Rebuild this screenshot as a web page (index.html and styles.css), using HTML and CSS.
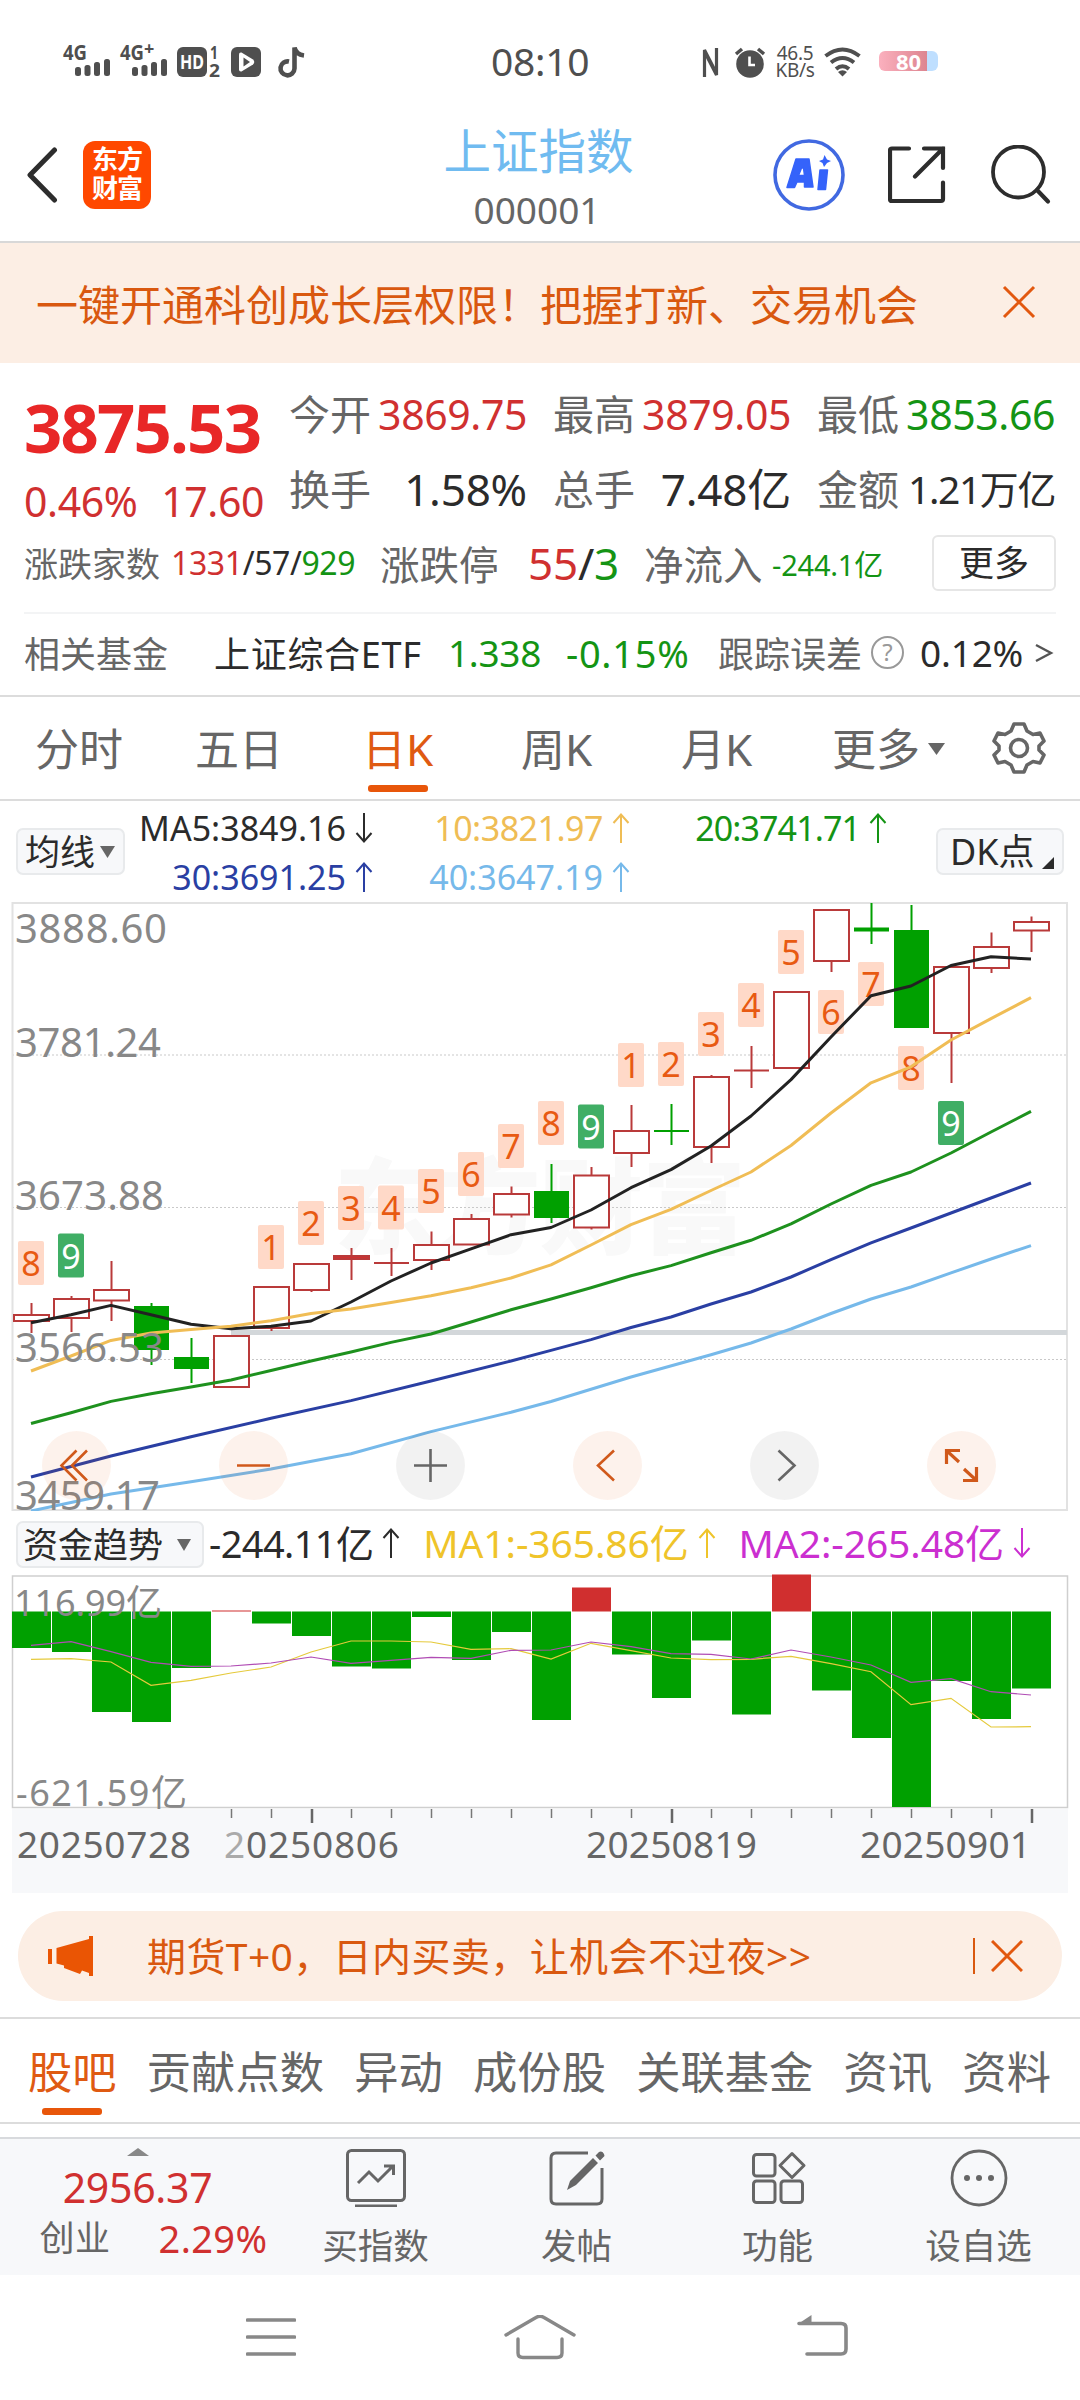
FILE: index.html
```html
<!DOCTYPE html>
<html lang="zh-CN">

<head>
    <meta charset="UTF-8">
    <meta name="viewport" content="width=device-width, initial-scale=1.0">
    <link rel="stylesheet" href="styles.css">
    <title>上证指数 000001</title>
</head>

<body>
    <!-- shared arrow icons -->
    <svg class="defs" width="0" height="0">
        <symbol id="up" viewBox="0 0 18 30"><path d="M9 30V2M1.500 10L9 1.500L16.500 10" fill="none" stroke="currentColor" stroke-width="2"/></symbol>
        <symbol id="down" viewBox="0 0 18 30"><path d="M9 0V28M1.500 20L9 28.500L16.500 20" fill="none" stroke="currentColor" stroke-width="2"/></symbol>
    </svg>

    <div class="status">
        <div class="status-left">
            <svg width="48" height="34" viewBox="0 0 48 34">
                <text x="0" y="17" font-size="21" font-weight="700" textLength="24" lengthAdjust="spacingAndGlyphs">4G</text>
                <rect x="12" y="24" width="6" height="9" rx="2.500"/><rect x="21.500" y="22" width="6" height="11" rx="2.500"/><rect x="31" y="19" width="6" height="14" rx="2.500"/><rect x="41" y="16" width="6" height="17" rx="2.500"/>
            </svg>
            <svg class="ml9" width="48" height="34" viewBox="0 0 48 34">
                <text x="0" y="17" font-size="21" font-weight="700" textLength="24" lengthAdjust="spacingAndGlyphs">4G</text>
                <text x="24" y="12" font-size="18" font-weight="700">+</text>
                <rect x="12" y="24" width="6" height="9" rx="2.500"/><rect x="21.500" y="22" width="6" height="11" rx="2.500"/><rect x="31" y="19" width="6" height="14" rx="2.500"/><rect x="41" y="16" width="6" height="17" rx="2.500"/>
            </svg>
            <svg class="ml9" width="43" height="34" viewBox="0 0 43 34">
                <rect x="0" y="4" width="30" height="30" rx="6"/>
                <text class="w" x="3" y="26" font-size="19" font-weight="700" textLength="24" lengthAdjust="spacingAndGlyphs">HD</text>
                <text x="33" y="16" font-size="17" font-weight="700" textLength="8" lengthAdjust="spacingAndGlyphs">1</text>
                <text x="32" y="34" font-size="17" font-weight="700" textLength="11" lengthAdjust="spacingAndGlyphs">2</text>
            </svg>
            <svg class="ml11" width="30" height="34" viewBox="0 0 30 34">
                <rect x="0" y="4" width="30" height="30" rx="6"/>
                <path class="w" d="M10.500 9.500L22 16.500Q24.500 19 22 21.500L10.500 28.500Q8 29 8 26.500V11.500Q8 9 10.500 9.500Z"/>
                <path d="M12.500 14.500L19 19L12.500 23.500Z"/>
            </svg>
            <svg class="ml17" width="27" height="34" viewBox="0 0 27 34">
                <path d="M11 18.500A7 7 0 1 0 16.500 25.500V4.500Q18 11.500 26 12.500" fill="none" stroke="#4f4f4f" stroke-width="4.600"/>
            </svg>
        </div>
        <div class="clock">08:10</div>
        <div class="status-right">
            <svg width="19" height="31" viewBox="0 0 19 31"><path d="M3.500 30V3L13 21.500" fill="none" stroke="#4f4f4f" stroke-width="3.200"/><path d="M15.500 1V28L6 9.500" fill="none" stroke="#4f4f4f" stroke-width="3.200"/></svg>
            <svg class="ml15" width="30" height="31" viewBox="0 0 30 31"><circle cx="15" cy="17" r="13.800"/><path d="M1 7L7 2M29 7L23 2" stroke="#4f4f4f" stroke-width="3.500"/><path d="M14.500 9.500V18H20" fill="none" stroke="#fff" stroke-width="2.600"/></svg>
            <div class="speed"><span>46.5</span><span>KB/s</span></div>
            <svg class="ml9" width="37" height="30" viewBox="0 0 37 30"><g fill="none" stroke="#4f4f4f" stroke-width="4"><path d="M1.500 9Q18.500 -4 35.500 9"/><path d="M7 15.500Q18.500 6.500 30 15.500"/><path d="M12 22Q18.500 16.500 25 22"/></g><path d="M14 25Q18.500 21.500 23 25L18.500 29.500Z"/></svg>
            <div class="battery">80</div>
        </div>
    </div>

    <header>
        <div class="head-left">
            <svg width="32" height="56" viewBox="0 0 32 56"><path d="M28.500 3L4 28L28.500 53" fill="none" stroke="#2d2d2d" stroke-width="5" stroke-linecap="round" stroke-linejoin="round"/></svg>
            <div class="logo">东方<br>财富</div>
        </div>
        <div class="title">
            <h1>上证指数</h1>
            <div class="code">000001</div>
        </div>
        <div class="head-right">
            <svg width="72" height="72" viewBox="0 0 72 72">
                <circle cx="36" cy="36" r="34" fill="none" stroke="#4169e1" stroke-width="3.600"/>
                <path d="M23 20H36L40 48H31.500V43H24L21.500 48.500H14ZM28.500 29L25.500 36.500H31.500L30.500 29Z" fill="#3563fa" stroke="#3563fa" stroke-width="1.500" stroke-linejoin="round"/>
                <path d="M47 31H54.500L52.500 50.500H45Z" fill="#3563fa" stroke="#3563fa" stroke-width="1.500" stroke-linejoin="round"/>
                <path d="M51.500 16L54 20.500L58 22L54 24L51 28L49.500 24L46 22L50 20.500Z" fill="#3563fa"/>
            </svg>
            <svg class="share" width="58" height="58" viewBox="0 0 58 58"><path d="M21 2.500H4Q2 2.500 2 4.500V53Q2 55 4 55H53Q55 55 55 53V36.500M36 2.500H55V22M55 2.500L27 30.500" fill="none" stroke="#2d2d2d" stroke-width="4.200" stroke-linecap="round"/></svg>
            <svg class="find" width="60" height="60" viewBox="0 0 60 60"><circle cx="27.500" cy="27" r="25.500" fill="none" stroke="#2d2d2d" stroke-width="3.800"/><path d="M46 45L57 56.500" stroke="#2d2d2d" stroke-width="4.200" stroke-linecap="round"/></svg>
        </div>
    </header>

    <div class="notice">
        <span>一键开通科创成长层权限！把握打新、交易机会</span>
        <svg width="34" height="34" viewBox="0 0 34 34"><path d="M2 2L32 32M32 2L2 32" stroke="#e2580f" stroke-width="3"/></svg>
    </div>

    <section class="quote">
        <div class="quote-top">
            <div class="last">
                <div class="price red">3875.53</div>
                <div class="change red"><span>0.46%</span><span>17.60</span></div>
            </div>
            <div class="cells">
                <div class="cell"><label>今开</label><b class="red">3869.75</b></div>
                <div class="cell"><label>最高</label><b class="red">3879.05</b></div>
                <div class="cell"><label>最低</label><b class="green">3853.66</b></div>
                <div class="cell"><label>换手</label><b class="big">1.58%</b></div>
                <div class="cell"><label>总手</label><b class="big vol">7.48亿</b></div>
                <div class="cell"><label>金额</label><b class="amount">1.21万亿</b></div>
            </div>
        </div>
        <div class="breadth">
            <label class="l1">涨跌家数</label>
            <span class="n1"><i class="red">1331</i>/57/<i class="green">929</i></span>
            <label class="l2">涨跌停</label>
            <span class="n2"><i class="red">55</i>/<i class="green">3</i></span>
            <label class="l3">净流入</label>
            <span class="n3 green">-244.1亿</span>
            <button class="more">更多</button>
        </div>
        <div class="fund">
            <label>相关基金</label>
            <span class="etf">上证综合ETF</span>
            <span class="f1 green">1.338</span>
            <span class="f2 green">-0.15%</span>
            <label class="track">跟踪误差</label>
            <span class="help">?</span>
            <span class="f3">0.12%</span>
            <svg width="20" height="22" viewBox="0 0 20 22"><path d="M2 3L17 11L2 19" fill="none" stroke="#555" stroke-width="2.400"/></svg>
        </div>
    </section>

    <nav class="periods">
        <a>分时</a><a>五日</a><a class="on">日K</a><a>周K</a><a>月K</a>
        <a class="drop">更多<svg width="17" height="12"><path d="M0 0H17L8.500 12Z" fill="#666"/></svg></a>
        <svg class="gear" width="54" height="54" viewBox="-27 -27 54 54"><g fill="none" stroke="#666" stroke-width="3.600" stroke-linejoin="round"><path d="M-5 -24H5L8 -17L14 -13.500L21 -15L25 -7L20 -2V2L25 7L21 15L14 13.500L8 17L5 24H-5L-8 17L-14 13.500L-21 15L-25 7L-20 2V-2L-25 -7L-21 -15L-14 -13.500L-8 -17Z"/><circle r="8.500"/></g></svg>
    </nav>

    <div class="averages">
        <button class="tag-btn">均线<svg width="15" height="12"><path d="M0 0H15L7.500 12Z" fill="#666"/></svg></button>
        <div class="ma-grid">
            <span class="c5">MA5:3849.16<svg><use href="#down"/></svg></span>
            <span class="c10">10:3821.97<svg><use href="#up"/></svg></span>
            <span class="c20">20:3741.71<svg><use href="#up"/></svg></span>
            <span class="c30">30:3691.25<svg><use href="#up"/></svg></span>
            <span class="c40">40:3647.19<svg><use href="#up"/></svg></span>
        </div>
        <button class="tag-btn dk">DK点<svg width="12" height="12"><path d="M12 0V12H0Z" fill="#2b2b2b"/></svg></button>
    </div>

    <!-- daily candles, one every 40 units -->
    <svg class="chart" width="1080" height="609" viewBox="0 902 1080 609">
        <text x="334" y="1246" class="mark" textLength="412">东方财富</text>
        <path d="M12 1055H1067M12 1207.500H1067M12 1359.500H1067" stroke="#c9c9c9" stroke-width="1" stroke-dasharray="2 2"/>
        <rect x="12.500" y="903" width="1054.500" height="607" fill="none" stroke="#e2e2e2" stroke-width="2"/>
        <rect x="231" y="1330" width="836" height="5" fill="#d3d7da"/>

        <g stroke="#b93a3a" stroke-width="2" fill="#fff">
            <path d="M31.500 1303V1333M71.500 1296V1332M111.500 1261V1321M271.500 1287V1331M311.500 1263V1292M351.500 1248V1280M391.500 1248V1276M431.500 1231.500V1270M471.500 1214V1244M511.500 1186.500V1217.500M591.500 1167V1229.500M631.500 1105V1167M711.500 1075V1163M751.500 1046V1088M831.500 909V972M951.500 966V1083M991.500 932.500V973M1031.500 916.500V952"/>
            <rect x="14" y="1315" width="35" height="6" /><rect x="54" y="1299" width="35" height="19"/><rect x="94" y="1290" width="35" height="10.500"/>
            <rect x="214" y="1336" width="35" height="51"/><rect x="254" y="1287" width="35" height="41"/><rect x="294" y="1264" width="35" height="26"/>
            <rect x="334" y="1256" width="35" height="3" fill="#d03030"/><path d="M374 1263H409"/>
            <rect x="414" y="1245" width="35" height="15"/><rect x="454" y="1219" width="35" height="25.500"/><rect x="494" y="1194" width="35" height="20.500"/>
            <rect x="574" y="1175.500" width="35" height="52"/><rect x="614" y="1131" width="35" height="22"/><rect x="694" y="1077" width="35" height="70"/>
            <path d="M734 1070.500H769"/>
            <rect x="774" y="992" width="35" height="76"/><rect x="814" y="910" width="35" height="51"/>
            <rect x="934" y="967" width="35" height="66"/><rect x="974" y="947" width="35" height="21"/><rect x="1014" y="922" width="35" height="8.500"/>
        </g>
        <g stroke="#00a000" stroke-width="2" fill="#00a000">
            <path d="M151.500 1303V1365M191.500 1338V1383M551.500 1164V1223M671.500 1104V1145M654 1131H689M871.500 903V944M911.500 905V930"/>
            <rect x="135" y="1307" width="33" height="42"/><rect x="175" y="1358" width="33" height="10"/><rect x="535" y="1192" width="33" height="25"/>
            <rect x="855" y="928.500" width="33" height="2"/><rect x="895" y="931" width="33" height="96"/>
        </g>

        <g class="count">
            <g fill="#ffd9c8">
                <rect x="18" y="1241" width="26" height="44" rx="2"/><rect x="258" y="1225" width="26" height="44" rx="2"/><rect x="298" y="1201" width="26" height="44" rx="2"/><rect x="338" y="1186" width="26" height="44" rx="2"/><rect x="378" y="1185.500" width="26" height="44" rx="2"/><rect x="418" y="1169" width="26" height="44" rx="2"/><rect x="458" y="1152" width="26" height="44" rx="2"/><rect x="498" y="1124" width="26" height="44" rx="2"/><rect x="538" y="1101" width="26" height="44" rx="2"/><rect x="618" y="1043" width="26" height="44" rx="2"/><rect x="658" y="1042" width="26" height="44" rx="2"/><rect x="698" y="1012" width="26" height="44" rx="2"/><rect x="738" y="983" width="26" height="44" rx="2"/><rect x="778" y="930" width="26" height="44" rx="2"/><rect x="818" y="990" width="26" height="44" rx="2"/><rect x="858" y="962" width="26" height="44" rx="2"/><rect x="898" y="1046" width="26" height="44" rx="2"/>
            </g>
            <g fill="#40ae65">
                <rect x="58" y="1233.500" width="26" height="44" rx="2"/><rect x="578" y="1104.500" width="26" height="44" rx="2"/><rect x="938" y="1101" width="26" height="44" rx="2"/>
            </g>
            <g fill="#e85a12">
                <text x="31" y="1276">8</text><text x="271" y="1260">1</text><text x="311" y="1236">2</text><text x="351" y="1221">3</text><text x="391" y="1220.500">4</text><text x="431" y="1204">5</text><text x="471" y="1187">6</text><text x="511" y="1159">7</text><text x="551" y="1136">8</text><text x="631" y="1078">1</text><text x="671" y="1077">2</text><text x="711" y="1047">3</text><text x="751" y="1018">4</text><text x="791" y="965">5</text><text x="831" y="1025">6</text><text x="871" y="997">7</text><text x="911" y="1081">8</text>
            </g>
            <g fill="#fff"><text x="71" y="1268.500">9</text><text x="591" y="1139.500">9</text><text x="951" y="1136">9</text></g>
        </g>

        <g fill="none" stroke-width="3" stroke-linejoin="round">
            <path stroke="#222" d="M31 1322.700L71 1314.700L111 1305.400L151 1314.700L191 1324.300L231 1328.700L271 1326.300L311 1321L351 1302L391 1281L431 1263L471 1248.800L511 1234.700L551 1227.500L591 1210L631 1187.700L671 1169.600L711 1146L751 1116L791 1079.600L831 1037L871 995.700L911 986L951 965.500L991 956.700L1031 959"/>
            <path stroke="#f0bd55" d="M31 1371L71 1356L111 1340.400L151 1333L191 1329.500L231 1326.300L271 1320.700L311 1313.500L351 1309L391 1302.600L431 1295.800L471 1287.700L511 1278L551 1264.800L591 1245L631 1224.700L671 1209.400L711 1190.500L751 1172L791 1145.500L831 1113L871 1082.800L911 1066.800L951 1040L991 1018.600L1031 997.700"/>
            <path stroke="#1e911e" d="M31 1423.500L71 1412.700L111 1401.400L151 1393.800L191 1387L231 1380L271 1370.500L311 1361L351 1352L391 1342.400L431 1334L471 1322L511 1309.800L551 1299L591 1287.700L631 1275.700L671 1265.600L711 1252.800L751 1240.300L791 1223.900L831 1204L871 1185.300L911 1172L951 1153L991 1132L1031 1111.400"/>
            <path stroke="#2a3fa3" d="M31 1477L111 1456L191 1436.800L271 1418.300L351 1400.600L431 1381L511 1361L551 1350.400L591 1339.600L631 1327.500L671 1317L711 1304L751 1292L791 1277L831 1259.600L871 1242.800L911 1228L951 1213L991 1198L1031 1183"/>
            <path stroke="#76b9ea" d="M31 1511L111 1494L191 1481.800L271 1469L351 1453.700L431 1431.600L511 1412.300L551 1401.500L631 1377L711 1354.800L751 1343L791 1329L831 1313.500L871 1299L911 1287L951 1272.900L991 1259L1031 1245.600"/>
        </g>

        <g class="axis">
            <text x="15" y="943" textLength="152">3888.60</text>
            <text x="15" y="1057" textLength="146">3781.24</text>
            <text x="15" y="1210" textLength="149">3673.88</text>
            <text x="15" y="1362" textLength="149">3566.53</text>
            <text x="15" y="1510" textLength="145">3459.17</text>
        </g>

        <!-- chart controls -->
        <g fill="#e8570e" fill-opacity=".08">
            <circle cx="76.500" cy="1465.500" r="34.500"/><circle cx="253.500" cy="1465.500" r="34.500"/><circle cx="607.500" cy="1465.500" r="34.500"/><circle cx="961.500" cy="1465.500" r="34.500"/>
        </g>
        <g fill="#000" fill-opacity=".05"><circle cx="430.500" cy="1465.500" r="34.500"/><circle cx="784.500" cy="1465.500" r="34.500"/></g>
        <g fill="none" stroke="#d0591b" stroke-width="2.600">
            <path d="M76.500 1450.500L61.500 1465.500L76.500 1480.500M87 1450.500L72 1465.500L87 1480.500"/>
            <path d="M237 1465.500H270"/>
            <path d="M614 1450.500L598 1465.500L614 1480.500"/>
            <path d="M946.500 1464V1450.500H960M947 1451L959 1462M976.500 1467V1480.500H963M976 1480L964 1469" stroke-width="3.200"/>
        </g>
        <path d="M414 1465.500H447M430.500 1449V1482M778.500 1450.500L794.500 1465.500L778.500 1480.500" fill="none" stroke="#666" stroke-width="2.600"/>
    </svg>

    <div class="flow-head">
        <button class="tag-btn">资金趋势<svg width="14" height="12"><path d="M0 0H14L7 12Z" fill="#666"/></svg></button>
        <span class="v0">-244.11亿<svg><use href="#up"/></svg></span>
        <span class="v1">MA1:-365.86亿<svg><use href="#up"/></svg></span>
        <span class="v2">MA2:-265.48亿<svg><use href="#down"/></svg></span>
    </div>

    <svg class="chart" width="1080" height="320" viewBox="0 1574 1080 320">
        <rect x="12" y="1809" width="1056" height="84" fill="#f7f8fa"/>
        <rect x="12.500" y="1576" width="1055" height="231.500" fill="none" stroke="#cfcfcf" stroke-width="1.500"/>
        <path fill="#00a000" d="M12 1611.500h39v36.500h-39zM52 1611.500h39v40.500h-39zM92 1611.500h39v100.500h-39zM132 1611.500h39v110.500h-39zM172 1611.500h39v56.500h-39zM252 1611.500h39v12h-39zM292 1611.500h39v24.500h-39zM332 1611.500h39v55h-39zM372 1611.500h39v57h-39zM412 1611.500h39v5.500h-39zM452 1611.500h39v48.500h-39zM492 1611.500h39v20.500h-39zM532 1611.500h39v108.500h-39zM612 1611.500h39v43h-39zM652 1611.500h39v86.500h-39zM692 1611.500h39v29h-39zM732 1611.500h39v103h-39zM812 1611.500h39v79h-39zM852 1611.500h39v126.500h-39zM892 1611.500h39v195.500h-39zM932 1611.500h39v69.500h-39zM972 1611.500h39v107.500h-39zM1012 1611.500h39v77h-39z"/>
        <path fill="#d02f2f" d="M212 1610.500h39v1h-39zM572 1587.500h39v24h-39zM772 1574.500h39v37h-39z"/>
        <g fill="none" stroke-width="1.200">
            <path stroke="#e5ca3c" d="M31 1659.300L71 1658.700L111 1662L151 1685.300L191 1680.300L231 1673L271 1667L311 1652L351 1641L391 1641L431 1642L471 1649.300L511 1648.700L551 1659L591 1643.300L631 1650.700L671 1658L711 1659.700L751 1659.300L791 1656.300L831 1663.700L871 1671.700L911 1704.700L951 1698.300L991 1727L1031 1726.700"/>
            <path stroke="#b04cb4" d="M31 1645.300L71 1641.700L111 1651.700L151 1662.300L191 1666.300L231 1666L271 1663L311 1657L351 1663.300L391 1660.300L431 1657.300L471 1658.300L511 1650.300L551 1650L591 1642L631 1646.700L671 1653.700L711 1654.300L751 1659L791 1650L831 1657L871 1665L911 1682.300L951 1678.700L991 1691.700L1031 1695"/>
        </g>
        <path d="M231.500 1809V1818M271.500 1809V1818M351.500 1809V1818M391.500 1809V1818M431.500 1809V1818M471.500 1809V1818M511.500 1809V1818M551.500 1809V1818M591.500 1809V1818M631.500 1809V1818M711.500 1809V1818M751.500 1809V1818M791.500 1809V1818M831.500 1809V1818M871.500 1809V1818M911.500 1809V1818M951.500 1809V1818M991.500 1809V1818" stroke="#777" stroke-width="1.500"/>
        <path d="M312 1809V1823M672 1809V1823M1032 1809V1823" stroke="#666" stroke-width="2.500"/>
        <g class="axis small">
            <text x="14" y="1616" textLength="148">116.99亿</text>
            <text x="16" y="1806" textLength="171">-621.59亿</text>
        </g>
        <g class="dates">
            <text x="17" y="1858" textLength="174">20250728</text>
            <text x="224" y="1858" textLength="175"><tspan fill="#aaa">2</tspan>0250806</text>
            <text x="586" y="1858" textLength="171">20250819</text>
            <text x="860" y="1858" textLength="171">20250901</text>
        </g>
    </svg>

    <div class="promo">
        <svg width="46" height="40" viewBox="0 0 46 40"><path d="M0 13H4V28H0ZM8.500 12L41 3V0H45V40H41V37L34 34.500L32 38L16 32V29.500L8.500 27.500Z" fill="#ea5504"/></svg>
        <span>期货T+0，日内买卖，让机会不过夜&gt;&gt;</span>
        <i class="bar"></i>
        <svg width="32" height="32" viewBox="0 0 32 32"><path d="M1 1L31 31M31 1L1 31" stroke="#e2580f" stroke-width="3"/></svg>
    </div>

    <nav class="tabs">
        <a class="on">股吧</a><a>贡献点数</a><a>异动</a><a>成份股</a><a>关联基金</a><a>资讯</a><a>资料</a>
    </nav>

    <footer>
        <div class="mini">
            <svg width="22" height="8"><path d="M0 8L11 0L22 8Z" fill="#888"/></svg>
            <div class="mini-price">2956.37</div>
            <div class="mini-row"><label>创业</label><span>2.29%</span></div>
        </div>
        <a class="tool">
            <svg width="60" height="60" viewBox="0 0 60 60"><g fill="none" stroke="#666" stroke-width="3"><rect x="1.500" y="3.500" width="57" height="50" rx="4"/><path d="M9 59H51"/><path d="M12 36L23 25L32 34L47 19M38 19H47.500V28"/></g></svg>
            买指数
        </a>
        <a class="tool">
            <svg width="60" height="60" viewBox="0 0 60 60"><path d="M41 6H9Q4 6 4 11V52Q4 57 9 57H50Q55 57 55 52V21" fill="none" stroke="#666" stroke-width="3"/><path d="M20 43L23 34L46 11L51 16L29 38ZM48.500 8.500L52 5Q55 3.500 57 7L57.500 9L53 13.500Z" fill="#666"/></svg>
            发帖
        </a>
        <a class="tool">
            <svg width="60" height="60" viewBox="0 0 60 60"><g fill="none" stroke="#666" stroke-width="3"><rect x="5.500" y="7.500" width="21.500" height="21.500" rx="3"/><rect x="5.500" y="34" width="21.500" height="21.500" rx="3"/><rect x="33" y="34" width="21.500" height="21.500" rx="3"/><path d="M44 6.500L56 18.500L44 30.500L32 18.500Z" stroke-linejoin="round"/></g></svg>
            功能
        </a>
        <a class="tool">
            <svg width="60" height="60" viewBox="0 0 60 60"><circle cx="30" cy="31" r="27" fill="none" stroke="#666" stroke-width="2.800"/><g fill="#666"><circle cx="18" cy="31" r="3"/><circle cx="30" cy="31" r="3"/><circle cx="42" cy="31" r="3"/></g></svg>
            设自选
        </a>
    </footer>

    <div class="sysnav">
        <svg width="50" height="46" viewBox="0 0 50 46"><path d="M1.500 5H48.500M1.500 22H48.500M1.500 39H48.500" stroke="#888" stroke-width="3.600" stroke-linecap="round"/></svg>
        <svg class="home" width="72" height="46" viewBox="0 0 72 46"><path d="M2 20L32 2.500Q36 0 40 2.500L70 20M14 24V38Q14 42.500 19 42.500H53Q58 42.500 58 38V24" fill="none" stroke="#888" stroke-width="3.400" stroke-linecap="round"/></svg>
        <svg width="52" height="46" viewBox="0 0 52 46"><path d="M2 8.500H44Q49 8.500 49 13V34Q49 39 44 39H10" fill="none" stroke="#888" stroke-width="3.600" stroke-linecap="round"/><path d="M1 9L14.500 0V9Z" fill="#888"/></svg>
    </div>
</body>

</html>
```
FILE: styles.css
```css
body {
    font-family: "Noto Sans", "Noto Sans CJK SC", sans-serif;
    margin: 0;
    width: 1080px;
    height: 2400px;
    overflow: hidden;
    background: #fff;
    color: #2b2b2b;
    white-space: nowrap;
}

* {
    box-sizing: border-box;
}

svg {
    display: block;
    flex: none;
}

.defs {
    position: absolute;
}

i, b {
    font-style: normal;
    font-weight: 400;
}

button {
    font-family: inherit;
    color: #2b2b2b;
    padding: 0;
}

label {
    color: #666;
}

.red {
    color: #d03030;
}

.green {
    color: #149414;
}

/* status bar */
.status {
    height: 118px;
    padding: 0 142px 0 60px;
    display: grid;
    grid-template-columns: 431px 100px 1fr;
    color: #4f4f4f;
    fill: #4f4f4f;
}

.status svg {
    overflow: visible;
}

.status-left, .status-right {
    display: flex;
    align-items: flex-start;
    padding-top: 43px;
}

.status-left {
    padding-left: 3px;
}

.status-right {
    justify-content: flex-end;
    padding-top: 47px;
}

.status .w {
    fill: #fff;
}

.ml9 { margin-left: 9px; }
.ml11 { margin-left: 11px; }
.ml15 { margin-left: 15px; }
.ml17 { margin-left: 17px; }

.clock {
    font-size: 39px;
    line-height: 50px;
    padding-top: 36px;
    letter-spacing: -0.3px;
}

.speed {
    width: 40px;
    margin-left: 10px;
    font-size: 19px;
    line-height: 17px;
    letter-spacing: -0.3px;
    margin-top: -2px;
    display: flex;
    flex-direction: column;
    align-items: center;
}

.battery {
    width: 59px;
    height: 20px;
    margin: 4px 0 0 18px;
    border-radius: 6px;
    background: linear-gradient(90deg, #fbb0be, #dd8590 48px, #bfdfff 48px);
    color: #fff;
    font-size: 22px;
    font-weight: 700;
    line-height: 20px;
    text-align: center;
}

/* header */
header {
    height: 125px;
    border-bottom: 2px solid #d8d8d8;
    display: grid;
    grid-template-columns: 1fr auto 1fr;
    padding: 0 29px 0 26px;
}

.head-left {
    display: flex;
    align-items: center;
    padding-bottom: 9px;
}

.logo {
    width: 68px;
    height: 68px;
    margin-left: 25px;
    border-radius: 12px;
    background: #ff4800;
    color: #fff;
    font-size: 26px;
    font-weight: 700;
    line-height: 29px;
    letter-spacing: -1px;
    text-align: center;
    padding-top: 4px;
}

.title {
    text-align: center;
}

h1 {
    margin: 8px 0 0;
    font-size: 47.5px;
    font-weight: 400;
    line-height: 50px;
    color: #70bbf0;
}

.code {
    font-size: 37px;
    line-height: 50px;
    margin-top: 9px;
    padding-right: 3px;
    color: #666;
}

.head-right {
    display: flex;
    align-items: center;
    justify-content: flex-end;
    padding-bottom: 9px;
}

.share {
    margin-left: 43px;
}

.find {
    margin-left: 45px;
}

.notice {
    height: 120px;
    background: #fceee4;
    display: flex;
    align-items: center;
    justify-content: space-between;
    padding: 0 44px 2px 36px;
    color: #d9580f;
    font-size: 42px;
}

/* quote */
.quote {
    height: 334px;
    border-bottom: 2px solid #dcdcdc;
    padding: 14px 24px 0;
}

.quote-top {
    display: flex;
    height: 151px;
}

.last {
    width: 265px;
}

.price {
    font-size: 67px;
    font-weight: 700;
    line-height: 94px;
    letter-spacing: -1.8px;
    padding-top: 3px;
    color: #e82727;
}

.change {
    display: flex;
    justify-content: space-between;
    width: 240px;
    font-size: 41px;
    line-height: 54px;
    letter-spacing: -0.4px;
}

.cells {
    flex: 1;
    display: grid;
    grid-template-columns: repeat(3, 238px);
    grid-template-rows: 74px 75px;
    column-gap: 26px;
}

.cell {
    display: flex;
    justify-content: space-between;
    align-items: center;
    font-size: 41px;
    line-height: 70px;
}

.cell b {
    letter-spacing: -0.4px;
}

.cell .big {
    font-size: 44px;
    letter-spacing: -0.2px;
}

.cell .amount {
    font-size: 39px;
    letter-spacing: -1.4px;
}

.breadth {
    height: 86px;
    display: flex;
    align-items: center;
    border-bottom: 2px solid #f3f4f5;
    padding-bottom: 15px;
}

.breadth .l1 { width: 147px; font-size: 34px; }
.breadth .n1 { width: 209px; font-size: 32px; letter-spacing: -0.4px; }
.breadth .l2 { width: 148px; font-size: 39.5px; }
.breadth .n2 { width: 116px; font-size: 44px; letter-spacing: -0.2px; }
.breadth .l3 { width: 128px; font-size: 39.5px; }
.breadth .n3 { font-size: 29px; letter-spacing: -0.2px; }

.more {
    width: 124px;
    height: 56px;
    margin-left: auto;
    background: #fff;
    border: 2px solid #e6e6e6;
    border-radius: 6px;
    font-size: 35px;
    line-height: 48px;
}

.fund {
    height: 80px;
    display: flex;
    align-items: center;
    font-size: 36px;
    padding-bottom: 3px;
}

.fund label { width: 143px; }
.fund .etf { margin-left: 47px; width: 234px; letter-spacing: 0.7px; }
.fund .f1 { width: 118px; font-size: 37px; letter-spacing: -0.3px; }
.fund .f2 { width: 152px; font-size: 38px; letter-spacing: 0.7px; }
.fund .f3 { width: 114px; margin-left: 16px; font-size: 37px; letter-spacing: -0.2px; }

.help {
    width: 33px;
    height: 33px;
    margin-left: 10px;
    border: 2.5px solid #999;
    border-radius: 50%;
    color: #999;
    font-size: 24px;
    line-height: 28px;
    text-align: center;
}

/* period tabs */
.periods {
    height: 104px;
    border-bottom: 2px solid #dcdcdc;
    display: grid;
    grid-template-columns: 160px 167px 159px 160px 151px 1fr auto;
    justify-items: start;
    align-items: center;
    padding: 0 34px 0 35px;
    font-size: 44px;
    line-height: 70px;
    color: #666;
}

.periods a {
    position: relative;
    padding-top: 2px;
}

.periods .drop {
    display: flex;
    align-items: center;
    gap: 8px;
}

.on {
    color: #df5a12;
}

.on::after {
    content: "";
    position: absolute;
    left: 50%;
    bottom: -8px;
    width: 60px;
    height: 7px;
    margin-left: -30px;
    border-radius: 3px;
    background: #e8560a;
}

/* moving averages */
.averages {
    height: 101px;
    display: flex;
    align-items: flex-start;
    padding: 0 16px;
}

.tag-btn {
    height: 47px;
    margin-top: 27px;
    border: 2px solid #e8eaec;
    border-radius: 7px;
    background: #f7f8fa;
    font-size: 35px;
    line-height: 38px;
    display: flex;
    align-items: center;
    gap: 5px;
    padding: 0 7px;
}

.averages .tag-btn {
    width: 109px;
}

.averages .dk {
    width: 128px;
    margin-left: auto;
    gap: 7px;
    padding: 0 3px 0 12px;
    font-size: 36px;
}

.dk svg {
    margin-top: 22px;
}

.ma-grid {
    display: grid;
    grid-template-columns: 248px 257px 257px;
    grid-template-rows: 49px 49px;
    padding-top: 2px;
    font-size: 34px;
    letter-spacing: 0;
}

.ma-grid span {
    display: flex;
    align-items: center;
    justify-content: flex-end;
    line-height: 48px;
}

.ma-grid svg, .flow-head span svg {
    width: 18px;
    height: 30px;
    margin-left: 9px;
}

.c10 { color: #efbd55; letter-spacing: -0.5px; }
.ma-grid .c20 { color: #149414; letter-spacing: -0.9px; }
.c30 { color: #2a3fa3; }
.c40 { color: #76b9ea; }

/* charts */
.mark {
    font-size: 104px;
    font-weight: 900;
    fill: #f9f9f9;
}

.count text {
    font-size: 34px;
    text-anchor: middle;
}

.axis text {
    font-size: 40px;
    fill: #888;
}

.axis.small text {
    font-size: 36px;
}

.dates text {
    font-size: 37px;
    fill: #666;
}

.flow-head {
    height: 63px;
    display: flex;
    align-items: center;
    padding: 0 49px 0 16px;
    font-size: 38px;
    line-height: 50px;
    letter-spacing: -0.6px;
}

.flow-head .tag-btn {
    width: 188px;
    margin: 4px 5px 0 0;
    gap: 14px;
    padding: 0 5px;
    letter-spacing: 0;
}

.flow-head span {
    display: flex;
    align-items: center;
}

.v1 {
    color: #efc42a;
    margin-left: auto;
}

.v2 {
    color: #cb2fd0;
    margin-left: auto;
}

.flow-head .v1, .flow-head .v2 {
    font-size: 39px;
    letter-spacing: -0.1px;
}

.promo {
    height: 90px;
    margin: 17px 18px 0;
    border-radius: 45px;
    background: #fceee4;
    display: flex;
    align-items: center;
    padding: 0 39px 0 30px;
    font-size: 39px;
    color: #d9580f;
}

.promo span {
    margin: -5px 0 0 53px;
    letter-spacing: 0.4px;
}

.bar {
    width: 2px;
    height: 36px;
    margin: 0 16px 0 auto;
    background: #d9580f;
}

/* bottom tabs */
.tabs {
    height: 107px;
    margin-top: 16px;
    border-top: 2px solid #dcdcdc;
    border-bottom: 2px solid #dcdcdc;
    display: flex;
    align-items: center;
    justify-content: space-between;
    padding: 2px 29px 0 28px;
    font-size: 44.3px;
    line-height: 70px;
    color: #666;
}

.tabs a {
    position: relative;
}

footer {
    height: 138px;
    margin-top: 13px;
    border-top: 2px solid #d8dadd;
    background: #f7f8fa;
    display: grid;
    grid-template-columns: 275px repeat(4, 201px);
}

.mini {
    display: flex;
    flex-direction: column;
    align-items: center;
    padding-top: 9px;
    color: #d03030;
}

.mini-price {
    font-size: 41px;
    line-height: 52px;
    margin-top: 5px;
    letter-spacing: -0.3px;
}

.mini-row {
    display: flex;
    align-items: center;
    justify-content: space-between;
    width: 228px;
    margin-left: 32px;
    font-size: 38px;
    line-height: 50px;
    letter-spacing: 0.4px;
}

.mini-row label {
    font-size: 35px;
}

.tool {
    display: flex;
    flex-direction: column;
    align-items: center;
    padding-top: 8px;
    font-size: 35.5px;
    line-height: 40px;
    color: #666;
    gap: 18px;
}

.sysnav {
    height: 126px;
    display: flex;
    justify-content: space-between;
    align-items: center;
    padding: 0 231px 0 246px;
}

.home {
    margin-right: 13px;
}
```
